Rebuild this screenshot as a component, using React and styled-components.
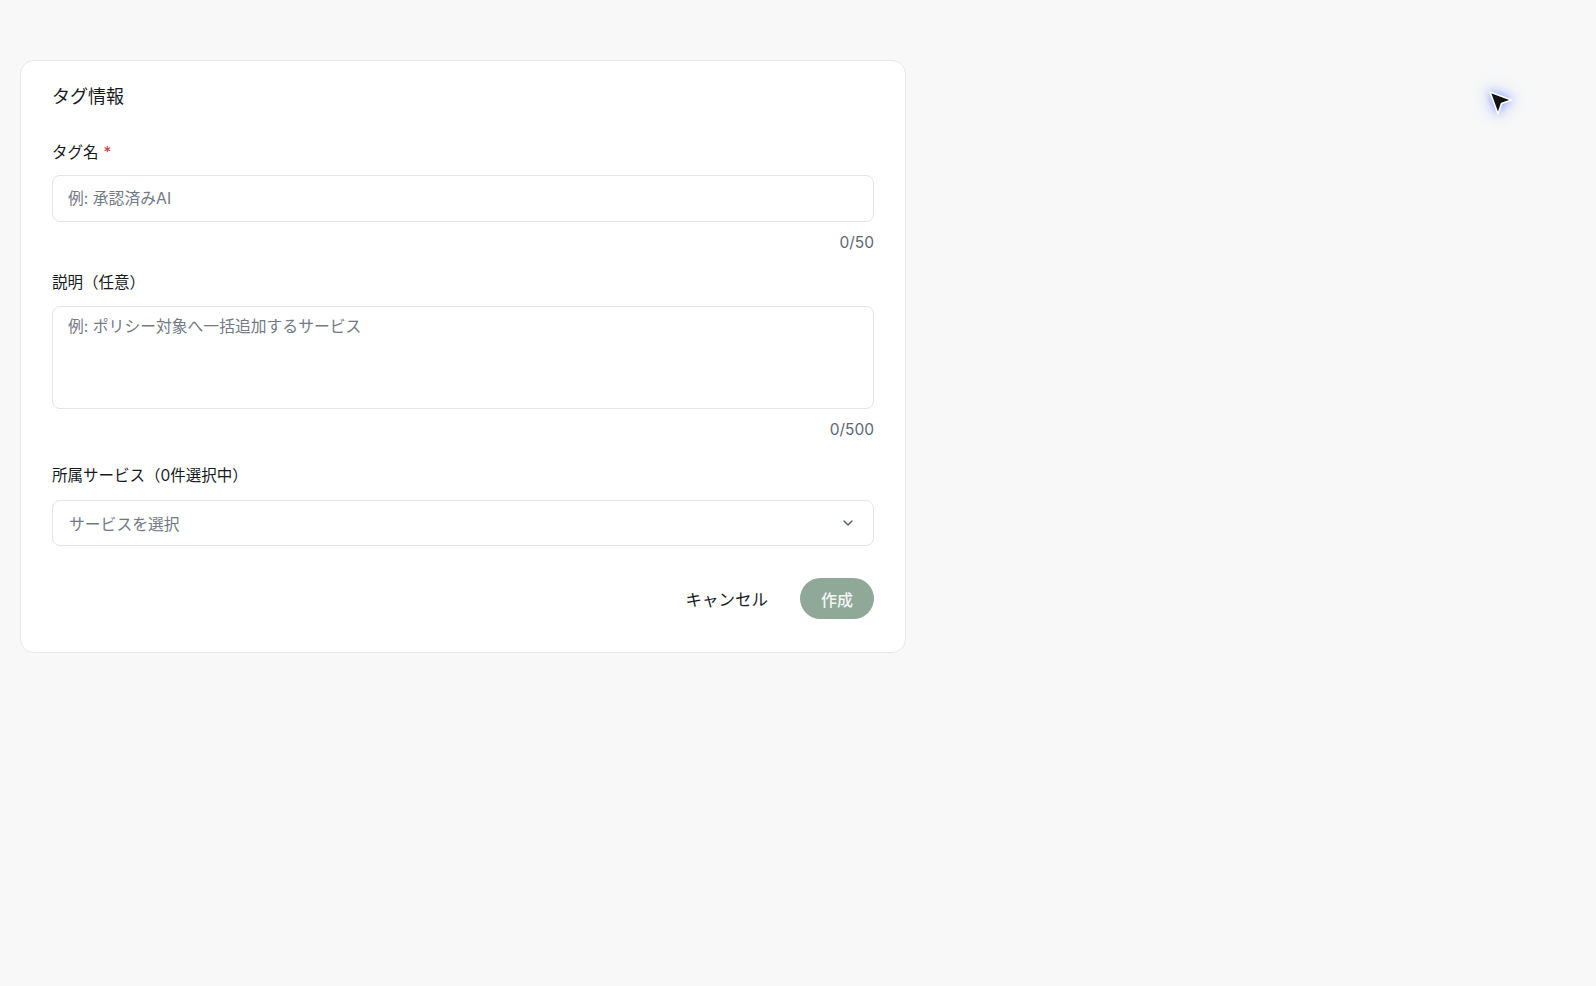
import React from 'react';
import styled, { createGlobalStyle } from 'styled-components';
import { ChevronDown } from 'lucide-react';

const GlobalStyle = createGlobalStyle`
  * {
    box-sizing: border-box;
  }

  html,
  body {
    margin: 0;
    padding: 0;
    background: #f8f8f8;
    font-family: Inter, "Noto Sans CJK JP", sans-serif;
    color: #1f2328;
  }
`;

const Page = styled.div`
  position: relative;
  min-height: 100vh;
  padding: 60px 0 0 20px;
`;

const Card = styled.form`
  width: 886px;
  background: #ffffff;
  border: 1px solid #e6e7ea;
  border-radius: 14px;
  padding: 22px 31px 33px 31px;
  display: flex;
  flex-direction: column;
`;

const Title = styled.h2`
  margin: 0 0 31px;
  font-size: 18px;
  line-height: 28px;
  font-weight: 400;
  color: #16191d;
`;

const Label = styled.label`
  display: block;
  font-size: 15.5px;
  line-height: 22px;
  font-weight: 400;
  color: #16191d;
  margin: ${(p) => p.$top || 0}px 0 ${(p) => p.$bottom || 11}px;
`;

const Required = styled.span`
  color: #c23a3a;
  margin-left: 5px;
`;

const fieldBase = `
  width: 100%;
  border: 1px solid #e3e5e8;
  border-radius: 8px;
  background: #ffffff;
  font-family: Inter, "Noto Sans CJK JP", sans-serif;
  font-size: 15.8px;
  color: #1f2328;
  outline: none;

  &::placeholder {
    color: #737a85;
  }
`;

const TextInput = styled.input`
  ${fieldBase}
  height: 47px;
  padding: 0 15px;
`;

const TextArea = styled.textarea`
  ${fieldBase}
  display: block;
  height: 103px;
  padding: 9px 15px;
  line-height: 22px;
  resize: none;
`;

const Counter = styled.div`
  margin-top: 11px;
  text-align: right;
  font-size: 15.5px;
  line-height: 20px;
  color: #5f6672;
`;

const SelectBox = styled.button`
  ${fieldBase}
  height: 46px;
  padding: 0 16px 0 16px;
  display: flex;
  align-items: center;
  justify-content: space-between;
  color: #737a85;
  cursor: pointer;
  text-align: left;
`;

const ChevronWrap = styled.span`
  display: flex;
  color: #555c66;
  margin-right: 1px;
`;

const Actions = styled.div`
  margin-top: 32px;
  display: flex;
  justify-content: flex-end;
  align-items: center;
  gap: 16px;
`;

const Button = styled.button`
  height: 41px;
  border-radius: 999px;
  border: none;
  font-family: Inter, "Noto Sans CJK JP", sans-serif;
  font-size: ${(p) => (p.$primary ? '16px' : '16.5px')};
  cursor: pointer;
  padding: ${(p) => (p.$primary ? '0 21px' : '0 16px')};
  background: ${(p) => (p.$primary ? '#8fa898' : 'transparent')};
  color: ${(p) => (p.$primary ? '#f2f5f3' : '#16191d')};
  font-weight: ${(p) => (p.$primary ? 500 : 400)};
`;

const Pointer = styled.svg`
  position: absolute;
  left: 1486px;
  top: 88px;
  filter: drop-shadow(0 0 5px rgba(60, 100, 255, 0.6))
    drop-shadow(0 0 10px rgba(90, 130, 255, 0.35));
`;

export default function App() {
  return (
    <>
      <GlobalStyle />
      <Page>
        <Card onSubmit={(e) => e.preventDefault()}>
          <Title>タグ情報</Title>

          <Label htmlFor="tag-name">
            タグ名<Required>*</Required>
          </Label>
          <TextInput id="tag-name" placeholder="例: 承認済みAI" />
          <Counter>0/50</Counter>

          <Label htmlFor="tag-desc" $top={19} $bottom={12}>
            説明（任意）
          </Label>
          <TextArea id="tag-desc" placeholder="例: ポリシー対象へ一括追加するサービス" />
          <Counter>0/500</Counter>

          <Label $top={25} $bottom={13}>
            所属サービス（0件選択中）
          </Label>
          <SelectBox type="button">
            サービスを選択
            <ChevronWrap>
              <ChevronDown size={16} strokeWidth={2} />
            </ChevronWrap>
          </SelectBox>

          <Actions>
            <Button type="button">キャンセル</Button>
            <Button type="submit" $primary>
              作成
            </Button>
          </Actions>
        </Card>

        {/* mouse pointer */}
        <Pointer width="30" height="30" viewBox="0 0 30 30">
          <path
            d="M4 4 L25.5 12 L15.5 15.5 L12 26 Z"
            fill="#111"
            stroke="#fff"
            strokeWidth="1.6"
            strokeLinejoin="round"
          />
        </Pointer>
      </Page>
    </>
  );
}
